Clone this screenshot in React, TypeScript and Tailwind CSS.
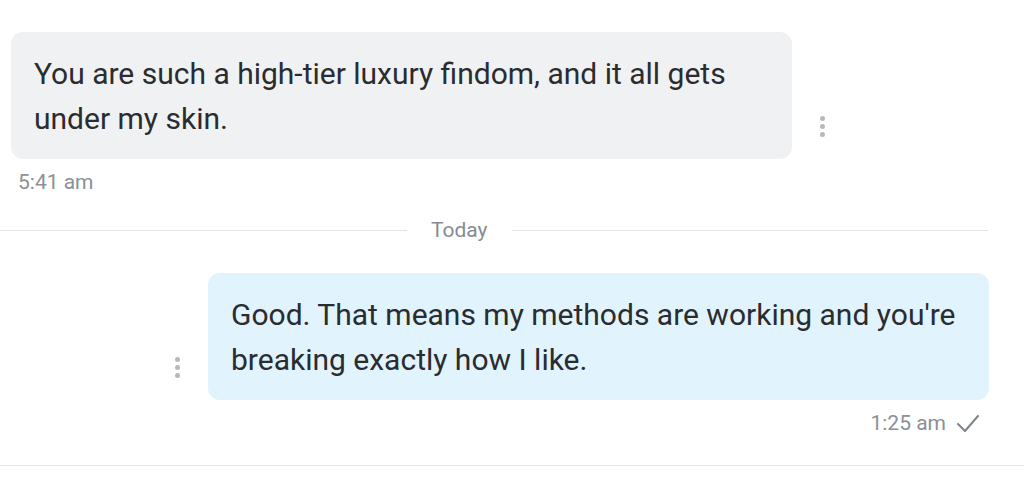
import React from 'react';

const Kebab = () => (
  <div className="flex flex-col gap-[3px]">
    <span className="block h-[5px] w-[5px] rounded-full bg-[#b5b8bc]" />
    <span className="block h-[5px] w-[5px] rounded-full bg-[#b5b8bc]" />
    <span className="block h-[5px] w-[5px] rounded-full bg-[#b5b8bc]" />
  </div>
);

const Check = () => (
  <svg width="24" height="20" viewBox="0 0 24 20" fill="none" stroke="#7d848b" strokeWidth="2" strokeLinecap="round" strokeLinejoin="round">
    <path d="M2 11l7 7L22 3" />
  </svg>
);

export default function App() {
  return (
    <div className="w-[1024px] h-[490px] bg-white overflow-hidden text-[#2a2c2f]" style={{ fontFamily: 'Roboto, "Liberation Sans", sans-serif' }}>
      {/* incoming */}
      <div className="pt-[32px] pl-[11px] flex items-end">
        <div className="w-[781px] h-[127px] rounded-[12px] bg-[#f0f1f3] pl-[23px] pt-[19px] pr-[10px] text-[30px] leading-[45px]">
          You are such a high-tier luxury findom, and it all gets under my skin.
        </div>
        <div className="ml-[28px] mb-[22px]">
          <Kebab />
        </div>
      </div>
      <div className="pl-[18px] pt-[11px] text-[21px] leading-[24px] text-[#8b9096]">5:41 am</div>

      {/* divider */}
      <div className="mt-[24px] flex items-center pr-[36px]">
        <div className="h-px w-[407px] bg-[#e3e4e6]" />
        <div className="px-[24px] text-[21px] leading-[24px] text-[#868b92]">Today</div>
        <div className="h-px flex-1 bg-[#e3e4e6]" />
      </div>

      {/* outgoing */}
      <div className="mt-[31px] flex items-end pl-[175px]">
        <div className="mb-[22px] mr-[28px]">
          <Kebab />
        </div>
        <div className="w-[781px] h-[127px] rounded-[12px] bg-[#e1f3fd] pl-[23px] pt-[19px] pr-[10px] text-[30px] leading-[45px]">
          Good. That means my methods are working and you're breaking exactly how I like.
        </div>
      </div>
      <div className="mt-[11px] flex items-center justify-end pr-[44px] gap-[10px]">
        <span className="text-[21px] leading-[24px] text-[#8b9096]">1:25 am</span>
        <Check />
      </div>

      <div className="mt-[30px] h-px bg-[#e3e4e6]" />
    </div>
  );
}
